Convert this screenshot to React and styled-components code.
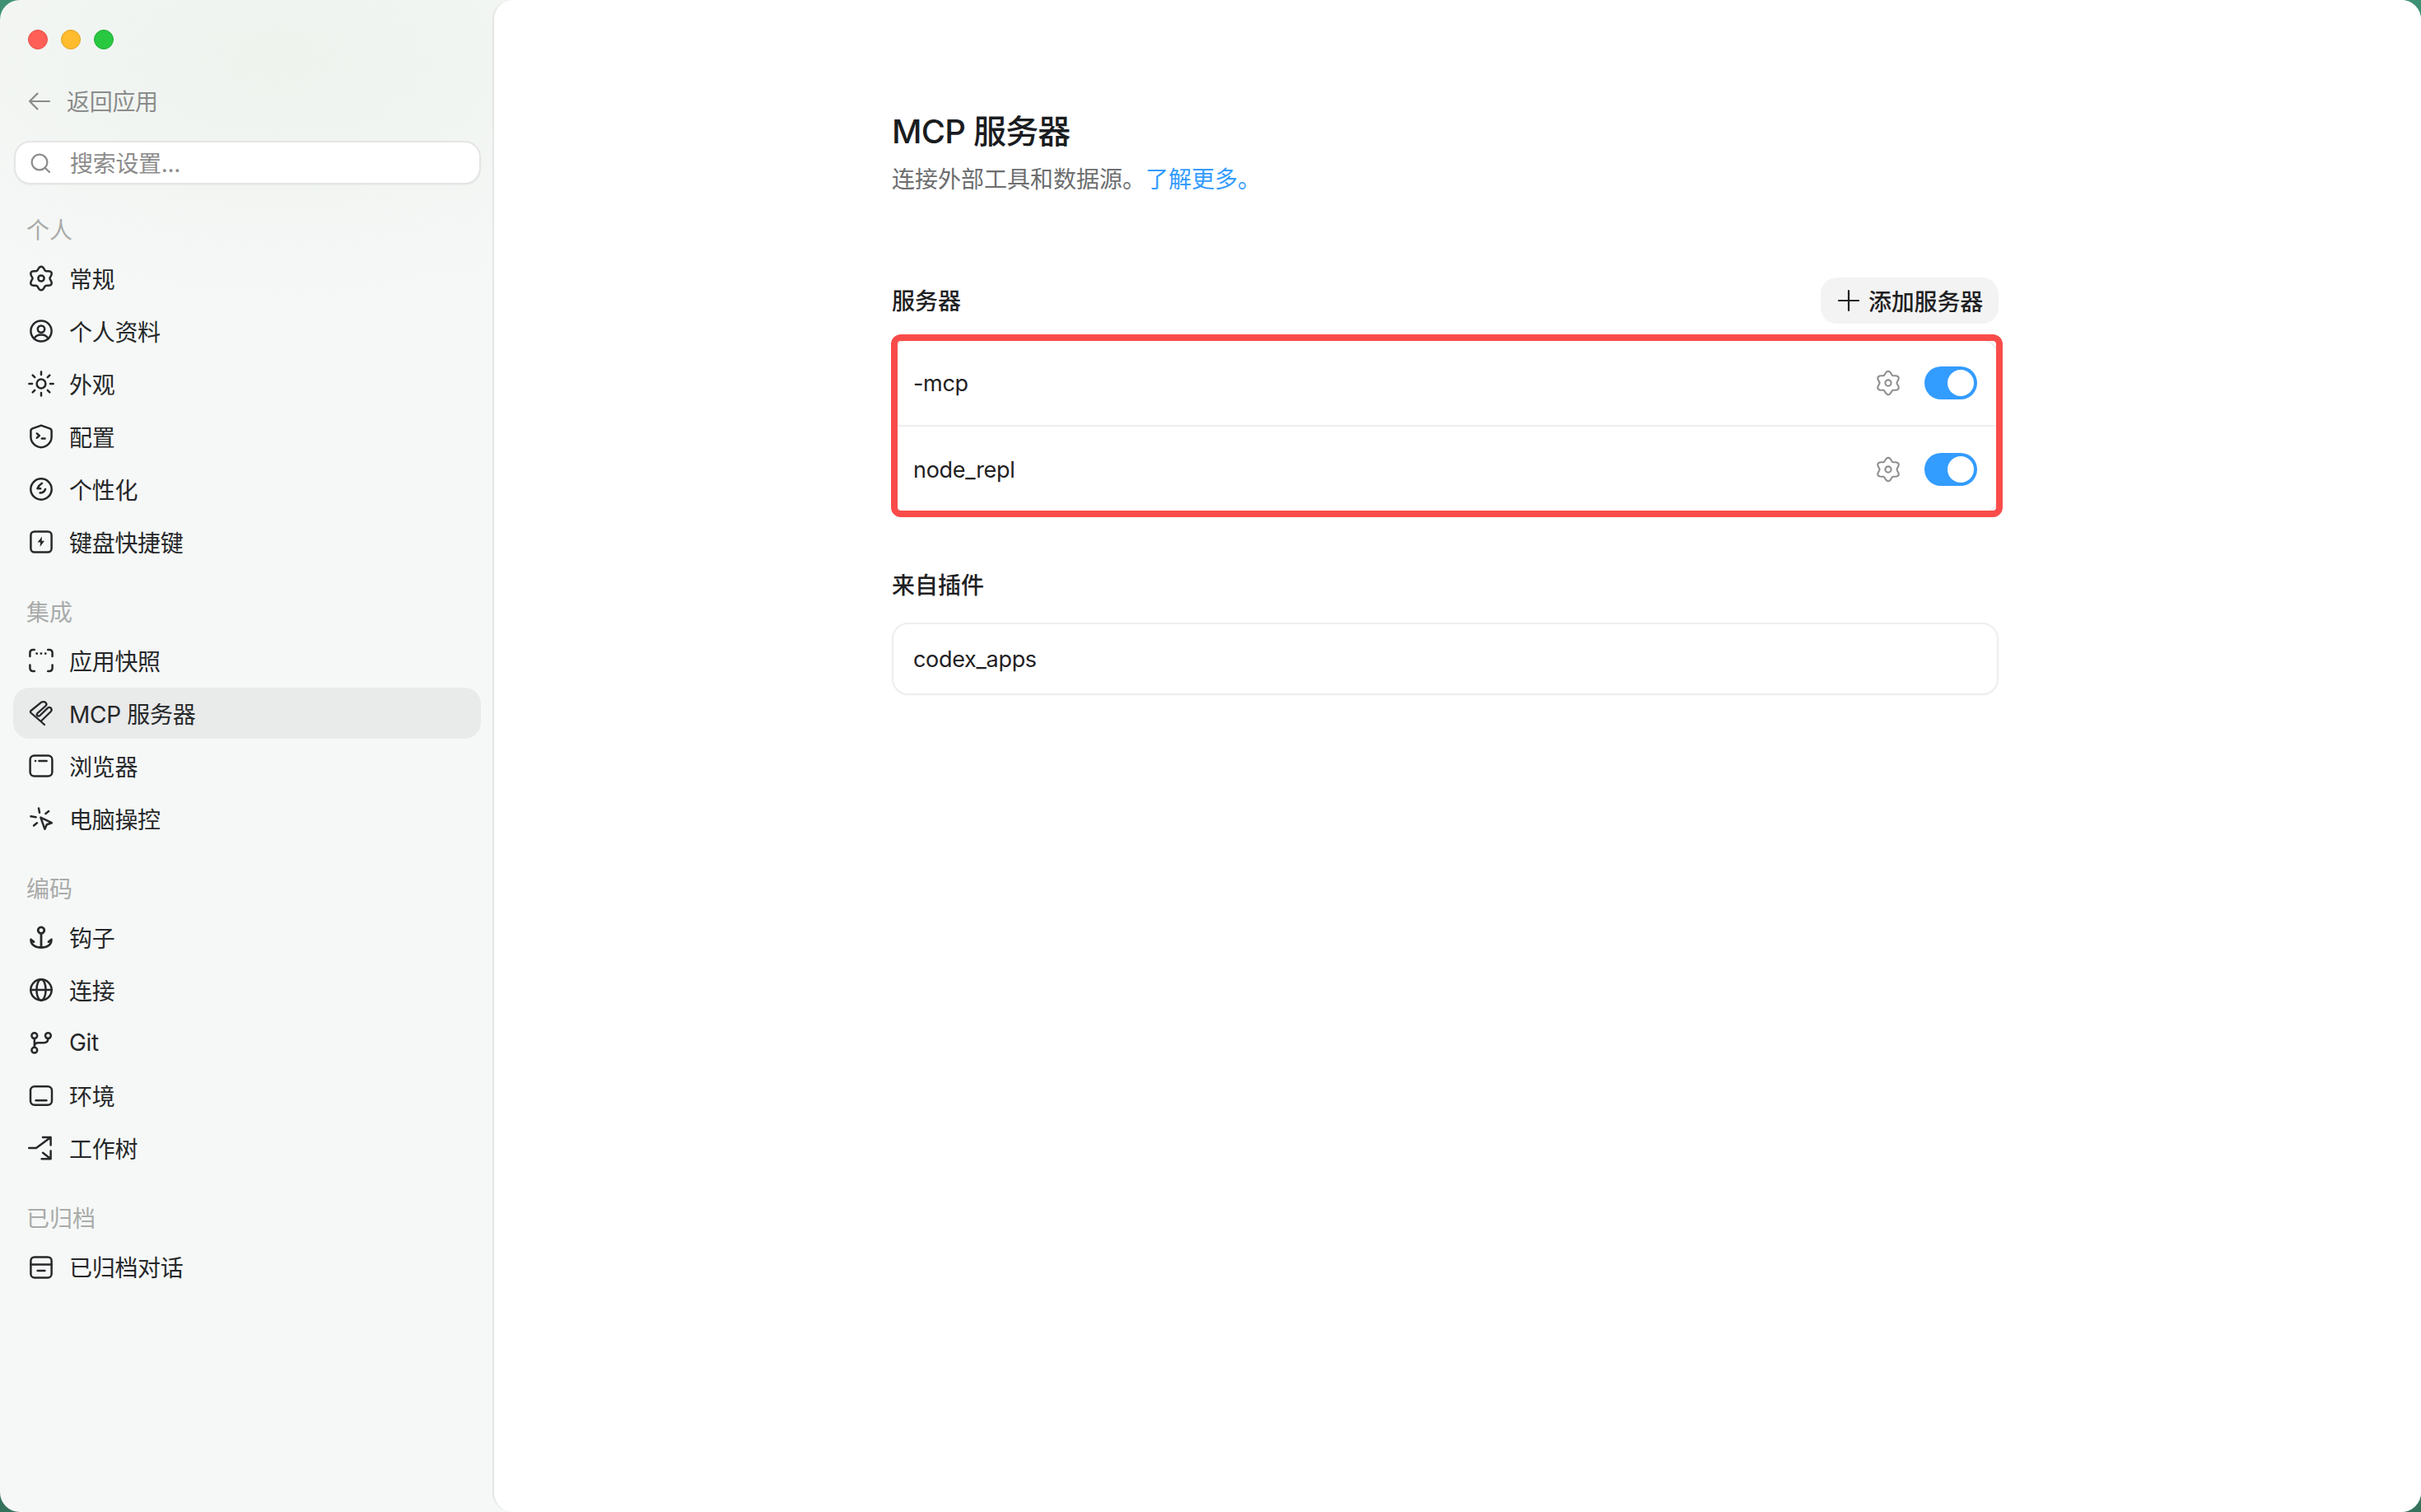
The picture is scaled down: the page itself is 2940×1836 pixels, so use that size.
import React from "react";
import styled, { createGlobalStyle } from "styled-components";

const GlobalStyle = createGlobalStyle`
  html, body {
    margin: 0;
    padding: 0;
    width: 2940px;
    height: 1836px;
    overflow: hidden;
    font-family: Inter, "Noto Sans CJK SC", sans-serif;
    color: #1f2123;
  }
  * {
    box-sizing: border-box;
  }
`;

const Desktop = styled.div`
  width: 2940px;
  height: 1836px;
  background: linear-gradient(180deg, #3f9173 0%, #35725b 100%);
`;

const Window = styled.div`
  display: flex;
  width: 100%;
  height: 100%;
  border-radius: 24px;
  overflow: hidden;
  background:
    radial-gradient(620px 320px at 340px 70px, #eef3ee 0%, rgba(238, 243, 238, 0) 100%),
    #f6f8f7;
`;

const Sidebar = styled.aside`
  width: 598px;
  flex-shrink: 0;
  padding: 36px 14px 0 16px;
  display: flex;
  flex-direction: column;
`;

const TrafficLights = styled.div`
  display: flex;
  gap: 16px;
  padding-left: 18px;
`;

const Light = styled.span`
  width: 24px;
  height: 24px;
  border-radius: 50%;
  background: ${(p) => p.$color};
  border: 1px solid ${(p) => p.$edge};
`;

const BackRow = styled.div`
  display: flex;
  align-items: center;
  gap: 17px;
  height: 48px;
  margin-top: 39px;
  padding-left: 16px;
  font-size: 28px;
  letter-spacing: -0.3px;
  color: #8b8c8c;
`;

const SearchBox = styled.div`
  display: flex;
  align-items: center;
  gap: 20px;
  height: 53px;
  margin: 24px 0 0 1px;
  padding-left: 14px;
  background: #fff;
  border: 2px solid #e4e5e4;
  border-radius: 20px;
  box-shadow: 0 1px 2px rgba(0, 0, 0, 0.04);
  font-size: 28px;
  letter-spacing: -0.3px;
  color: #8c8c8c;
`;

const LiftedText = styled.span`
  padding-bottom: 2px;
`;

const NavGroup = styled.nav`
  display: flex;
  flex-direction: column;
  gap: 2px;
  margin-top: ${(p) => p.$top}px;
`;

const GroupLabel = styled.div`
  height: 54px;
  line-height: 54px;
  padding: 2px 0 0 16px;
  font-size: 28px;
  color: #a9abaa;
`;

const NavItem = styled.div`
  display: flex;
  align-items: center;
  gap: 18px;
  height: 62px;
  padding-left: 18px;
  border-radius: 20px;
  font-size: 28px;
  letter-spacing: -0.3px;
  color: #26282a;
  background: ${(p) => (p.$active ? "#e9eaea" : "transparent")};
`;

const Main = styled.main`
  flex: 1;
  background: #fff;
  border-left: 2px solid #e3e6e4;
  border-radius: 24px 0 0 24px;
  padding: 132px 0 0 483px;
`;

const Content = styled.div`
  width: 1344px;
`;

const Title = styled.h1`
  margin: 0;
  height: 56px;
  line-height: 56px;
  font-size: 40px;
  font-weight: 500;
  letter-spacing: -0.8px;
  color: #1a1c1f;
`;

const Subtitle = styled.p`
  margin: 10px 0 0;
  height: 40px;
  line-height: 40px;
  font-size: 28px;
  color: #6d6e6f;
`;

const LearnMore = styled.a`
  color: #339cff;
`;

const SectionHeader = styled.div`
  display: flex;
  align-items: center;
  justify-content: space-between;
  height: 56px;
  margin-top: 99px;
`;

const SectionTitle = styled.h2`
  margin: ${(p) => p.$margin || "0"};
  padding-top: 2px;
  line-height: 40px;
  font-size: 28px;
  font-weight: 500;
  color: #1f2123;
`;

const AddButton = styled.button`
  display: flex;
  align-items: center;
  gap: 12px;
  height: 56px;
  padding: 0 19px 0 22px;
  border: none;
  border-radius: 20px;
  background: #f3f3f3;
  font-family: inherit;
  font-size: 28px;
  font-weight: 500;
  letter-spacing: -0.2px;
  color: #1f2123;
`;

const Card = styled.div`
  position: relative;
  margin-top: ${(p) => p.$top || 0}px;
  border: 2px solid #eeeeee;
  border-radius: 20px;
  background: #fff;
  box-shadow: 0 1px 2px rgba(0, 0, 0, 0.03);
`;

const ServerRow = styled.div`
  display: flex;
  align-items: center;
  justify-content: space-between;
  height: ${(p) => p.$height}px;
  padding: 0 24px;
  border-bottom: ${(p) => (p.$divider ? "2px solid #eeeeee" : "none")};
`;

const ServerName = styled.span`
  padding-top: 1px;
  font-size: 27px;
  letter-spacing: -0.3px;
  color: #1f2123;
`;

const RowActions = styled.div`
  display: flex;
  align-items: center;
  gap: 28px;
`;

const Toggle = styled.span`
  display: flex;
  justify-content: flex-end;
  align-items: center;
  width: 64px;
  height: 40px;
  padding-right: 4px;
  border-radius: 20px;
  background: #339cff;
  &::after {
    content: "";
    width: 32px;
    height: 32px;
    border-radius: 50%;
    background: #fff;
  }
`;

/* the red annotation drawn over the first card */
const Highlight = styled.div`
  position: absolute;
  top: -8px;
  left: -3px;
  right: -7px;
  bottom: -6px;
  border: 8px solid #f94c4a;
  border-radius: 12px;
  pointer-events: none;
`;

const Svg = styled.svg`
  flex-shrink: 0;
  fill: none;
  stroke: currentColor;
  stroke-width: ${(p) => p.$stroke || 2.5};
  stroke-linecap: round;
  stroke-linejoin: round;
  overflow: visible;
`;

const Icon = ({ size = 32, stroke, children }) => (
  <Svg width={size} height={size} viewBox="0 0 32 32" $stroke={stroke}>
    {children}
  </Svg>
);

// six soft lobes, same shape for the sidebar and row gears
const flowerPath = () => {
  const pts = [];
  for (let i = 0; i < 72; i++) {
    const a = (i * 5 * Math.PI) / 180;
    const r = 12.4 + 1.9 * Math.cos(6 * (a - Math.PI / 2));
    pts.push(`${(16 + r * Math.cos(a)).toFixed(2)} ${(16 + r * Math.sin(a)).toFixed(2)}`);
  }
  return `M${pts.join("L")}Z`;
};

const Gear = ({ size, stroke }) => (
  <Icon size={size} stroke={stroke}>
    <path d={flowerPath()} />
    <circle cx="16" cy="16" r="3.6" />
  </Icon>
);

const sunRays = [0, 45, 90, 135, 180, 225, 270, 315].map((deg) => {
  const a = (deg * Math.PI) / 180;
  return `M${16 + 11 * Math.cos(a)} ${16 + 11 * Math.sin(a)}L${16 + 14.6 * Math.cos(a)} ${16 + 14.6 * Math.sin(a)}`;
});

const icons = {
  gear: <Gear />,
  profile: (
    <Icon>
      <circle cx="16" cy="16" r="12.6" />
      <circle cx="16" cy="13.6" r="4.2" />
      <path d="M7.5 25.4C9 21.6 12 20.4 16 20.4s7 1.2 8.5 5" />
    </Icon>
  ),
  sun: (
    <Icon>
      <circle cx="16" cy="16" r="5.4" />
      {sunRays.map((d) => (
        <path key={d} d={d} />
      ))}
    </Icon>
  ),
  shield: (
    <Icon>
      <path d="M16 2.6L26.6 6.4Q28.6 7.2 28.6 9.4V16.5C28.6 23.5 22.5 29.2 16 29.2S3.4 23.5 3.4 16.5V9.4Q3.4 7.2 5.4 6.4Z" />
      <path d="M10.8 12.4L13.8 15L10.8 17.6M16.8 18.4H20.6" />
    </Icon>
  ),
  personal: (
    <Icon>
      <circle cx="16" cy="16" r="12.7" />
      <path d="M17 8.8C14.4 10.4 12.4 12.6 11.4 15.2H15.2" />
      <path d="M21 16C20 19 17.6 20.6 14.6 20.6" />
    </Icon>
  ),
  keyboard: (
    <Icon>
      <rect x="3.4" y="3.4" width="25.2" height="25.2" rx="4.5" />
      <path d="M17 9.4L11.6 16.6H15L14.6 22L20 14.8H16.6Z" fill="currentColor" stroke="none" />
    </Icon>
  ),
  snapshot: (
    <Icon>
      <path d="M2.4 11V6.4A3.4 3.4 0 0 1 5.8 3H7.8M24.2 3H26.2A3.4 3.4 0 0 1 29.6 6.4V11" />
      <path d="M2.4 21.4V25.6A3.4 3.4 0 0 0 5.8 29H7.8M24.2 29H26.2A3.4 3.4 0 0 0 29.6 25.6V21.4" />
      <path d="M10.6 7.6H10.7M15.9 7.6H16M21.2 7.6H21.3" strokeWidth="2.8" />
    </Icon>
  ),
  mcp: (
    <Icon stroke="2.3">
      <path d="M20 30L15 25.5L3.4 15.5Q2.4 14 3.6 13L16 2.8Q19 1.4 21.4 3Q23.4 5 21.6 7L11.2 16.4Q10 18 11.6 19.2Q13 20 14.6 18.8L24 9.6Q26 8 27.8 9.8Q29.6 12 27.8 14L16 25.5" />
    </Icon>
  ),
  browser: (
    <Icon>
      <rect x="2.6" y="3.4" width="26.8" height="25.2" rx="5" />
      <path d="M9 10H9.1M13.4 10H22.6" />
    </Icon>
  ),
  computer: (
    <Icon>
      <path d="M15.4 14.6L28.8 21.2L22.8 23.2L20.4 28.8Z" />
      <path d="M13 3.4L14 8.8M25.2 7L21.4 10M3.4 13.2L9.6 14.2M7 24.4L11 21.2" />
    </Icon>
  ),
  hook: (
    <Icon stroke="2.8">
      <circle cx="16" cy="7.6" r="3.8" />
      <path d="M16 11.4V28.6M3.6 19C3.6 25.4 9 28.6 16 28.6S28.4 25.4 28.4 19M3.6 19L7 21.6M28.4 19L25 21.6" />
    </Icon>
  ),
  globe: (
    <Icon>
      <circle cx="16" cy="16" r="12.7" />
      <ellipse cx="16" cy="16" rx="5.6" ry="12.7" />
      <path d="M3.3 16H28.7" />
    </Icon>
  ),
  git: (
    <Icon>
      <circle cx="7.8" cy="7.6" r="3.4" />
      <circle cx="7.8" cy="25.2" r="3.4" />
      <circle cx="24.4" cy="7.6" r="3.4" />
      <path d="M7.8 11V21.8M24.4 11C24.4 14.4 22.4 16.2 19 16.2H12.6C9.4 16.2 7.8 17.8 7.8 20.4" />
    </Icon>
  ),
  environment: (
    <Icon>
      <rect x="3" y="5.2" width="26" height="22.6" rx="5" />
      <path d="M9.6 22.2H22.4" />
    </Icon>
  ),
  worktree: (
    <Icon>
      <path d="M1.2 16H10L27.6 3M18 3H27.6V12.6M18 21.8L27.6 29.2M16.6 29.2H27.6V19.4" />
    </Icon>
  ),
  archive: (
    <Icon>
      <rect x="3.4" y="4.4" width="25.2" height="25" rx="4.5" />
      <path d="M3.4 13.6H28.6M11.6 21H20.4" />
    </Icon>
  ),
};

const groups = [
  {
    label: "个人",
    top: 27,
    items: [
      ["gear", "常规"],
      ["profile", "个人资料"],
      ["sun", "外观"],
      ["shield", "配置"],
      ["personal", "个性化"],
      ["keyboard", "键盘快捷键"],
    ],
  },
  {
    label: "集成",
    top: 26,
    items: [
      ["snapshot", "应用快照"],
      ["mcp", "MCP 服务器", true],
      ["browser", "浏览器"],
      ["computer", "电脑操控"],
    ],
  },
  {
    label: "编码",
    top: 26,
    items: [
      ["hook", "钩子"],
      ["globe", "连接"],
      ["git", "Git"],
      ["environment", "环境"],
      ["worktree", "工作树"],
    ],
  },
  {
    label: "已归档",
    top: 26,
    items: [["archive", "已归档对话"]],
  },
];

const servers = [
  { name: "-mcp", divider: true },
  { name: "node_repl", divider: false },
];

const GearSlot = styled.span`
  display: flex;
  color: #8f8f8f;
`;

function App() {
  return (
    <Desktop>
      <GlobalStyle />
      <Window>
        <Sidebar>
          <TrafficLights>
            <Light $color="#ff5f57" $edge="#e9524a" />
            <Light $color="#febc2e" $edge="#e1a325" />
            <Light $color="#28c840" $edge="#22ad36" />
          </TrafficLights>
          <BackRow>
            <Icon stroke="2.2">
              <path d="M28 16H4M13.4 6.6L4 16L13.4 25.4" />
            </Icon>
            <LiftedText>返回应用</LiftedText>
          </BackRow>
          <SearchBox>
            <Icon stroke="2.2">
              <circle cx="15" cy="15" r="9.4" />
              <path d="M22 22L27 27" />
            </Icon>
            <LiftedText>搜索设置...</LiftedText>
          </SearchBox>
          {groups.map((group) => (
            <NavGroup key={group.label} $top={group.top}>
              <GroupLabel>{group.label}</GroupLabel>
              {group.items.map(([icon, text, active]) => (
                <NavItem key={text} $active={active}>
                  {icons[icon]}
                  {text}
                </NavItem>
              ))}
            </NavGroup>
          ))}
        </Sidebar>
        <Main>
          <Content>
            <Title>MCP 服务器</Title>
            <Subtitle>
              连接外部工具和数据源。<LearnMore>了解更多。</LearnMore>
            </Subtitle>
            <SectionHeader>
              <SectionTitle>服务器</SectionTitle>
              <AddButton>
                <Svg width="24" height="24" viewBox="0 0 24 24" $stroke="2.2">
                  <path d="M12 0V24M0 12H24" />
                </Svg>
                添加服务器
              </AddButton>
            </SectionHeader>
            <Card $top={19}>
              {servers.map((server) => (
                <ServerRow key={server.name} $height={104} $divider={server.divider}>
                  <ServerName>{server.name}</ServerName>
                  <RowActions>
                    <GearSlot>
                      <Gear size={32} stroke={2.1} />
                    </GearSlot>
                    <Toggle />
                  </RowActions>
                </ServerRow>
              ))}
              <Highlight />
            </Card>
            <SectionTitle $margin="65px 0 25px">来自插件</SectionTitle>
            <Card>
              <ServerRow $height={84}>
                <ServerName>codex_apps</ServerName>
              </ServerRow>
            </Card>
          </Content>
        </Main>
      </Window>
    </Desktop>
  );
}

export default App;
